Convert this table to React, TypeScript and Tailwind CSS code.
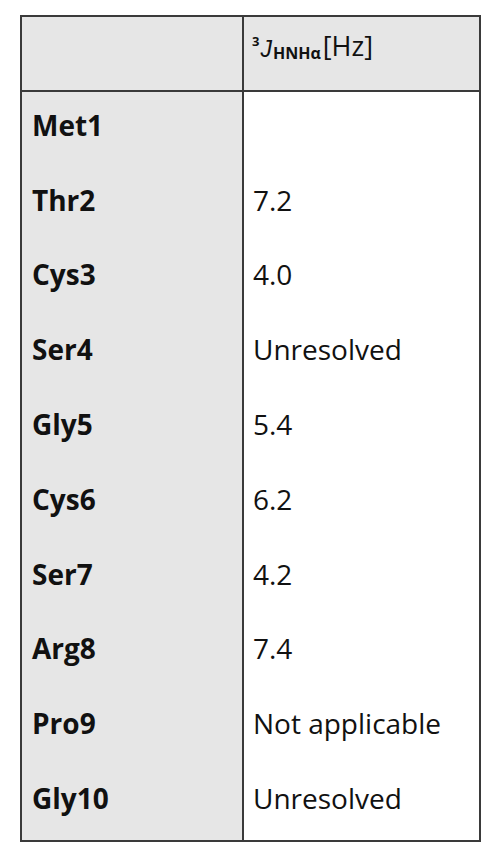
const rows: [string, string][] = [
  ["Met1", ""],
  ["Thr2", "7.2"],
  ["Cys3", "4.0"],
  ["Ser4", "Unresolved"],
  ["Gly5", "5.4"],
  ["Cys6", "6.2"],
  ["Ser7", "4.2"],
  ["Arg8", "7.4"],
  ["Pro9", "Not applicable"],
  ["Gly10", "Unresolved"],
];

export default function App() {
  return (
    <div className="min-h-[858px] w-[500px] bg-white pl-[20px] pt-[15px] font-['Open_Sans',sans-serif] text-[#111]">
      <div className="grid w-fit grid-cols-[222px_235px] border-2 border-[#3a3a3a]">
        <div className="h-[75px] border-r-2 border-b-2 border-[#3a3a3a] bg-[#e6e6e6]" />
        <div className="h-[75px] whitespace-nowrap border-b-2 border-[#3a3a3a] bg-[#e6e6e6] pl-[8px] pt-[15px] text-[27px] leading-none">
          <span className="align-[10px] text-[13px] font-bold">3</span>
          <span className="ml-[1px] align-[-1px] font-['Liberation_Sans',sans-serif] text-[23px] italic">J</span>
          <span className="ml-[1px] align-[-3px] text-[16px] font-bold">HNHα</span>
          <span className="ml-[2px]">[Hz]</span>
        </div>
        {rows.map(([name, value]) => (
          <div key={name} className="contents">
            <div className="flex h-[74.8px] items-center border-r-2 border-[#3a3a3a] bg-[#e6e6e6] pb-[9px] pl-[10px] text-[28px] font-bold">
              {name}
            </div>
            <div className="flex h-[74.8px] items-center pb-[9px] pl-[9px] text-[28px]">{value}</div>
          </div>
        ))}
      </div>
    </div>
  );
}
